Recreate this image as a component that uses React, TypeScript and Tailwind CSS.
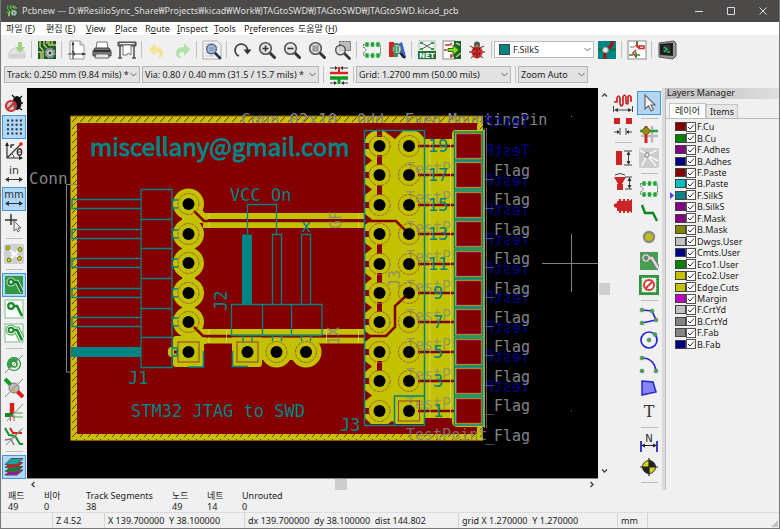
import type { ReactNode } from "react";

const rows = Array.from({ length: 10 }, (_, i) => 146 + Math.round(i * 29.4));
const headerRows = [204, 234, 263, 293, 322];

function Lens({ children }: { children?: ReactNode }) {
  return (
    <>
      <path d="M12.500 12.500l5 5" stroke="#333" strokeWidth="3" strokeLinecap="round" />
      <circle cx="8.500" cy="8.500" r="5.800" fill="#e4e4e4" stroke="#555" strokeWidth="1.600" />
      {children}
    </>
  );
}

function Chip() {
  return (
    <>
      <path d="M1.500 4.500h17v11h-17v-3a2.500 2.500 0 0 0 0-5z" fill="#f4f4f4" stroke="#666" strokeDasharray="2 1" />
      <path d="M3 2h4v5H3zM8.500 2h4v5h-4zM14 2h4v5h-4zM3 13h4v5H3zM8.500 13h4v5h-4zM14 13h4v5h-4z" fill="#1fa336" stroke="#e4f3e6" strokeWidth=".6" />
    </>
  );
}

function Schematic() {
  return (
    <>
      <rect x="1" y="1" width="18" height="18" fill="#fff" stroke="#888" />
      <path d="M10 1v5M2 15h4M9 12v6M9 15h4" stroke="#189030" strokeWidth="1.500" fill="none" />
      <path d="M12 6h5v2.500h-5zM9 10l-3 3 3 4M10 2v5h3" stroke="#c62828" strokeWidth="1.500" fill="none" />
      <path d="M3 7h4l2-2" stroke="#777" fill="none" />
    </>
  );
}

const icons: Record<string, ReactNode> = {
  Save: (
    <g opacity=".55">
      <path d="M2 13l3-4h10l3 4v5H2z" fill="#d8d8d8" stroke="#aaa" />
      <path d="M3 14h14v3H3z" fill="#bbb" />
      <path d="M11 2h4v5h3l-5 6-5-6h3z" fill="#66bb33" />
    </g>
  ),
  "Board setup": (
    <>
      <rect x="1" y="1" width="18" height="18" fill="#0d5c2b" />
      <path d="M3 1v6l3 3v9M7 1v4l3 3M12 1v4h7M1 12h3v7M15 1v3M10 1v3" stroke="#d6c86a" strokeWidth="1.400" fill="none" />
      <circle cx="13" cy="13" r="4.500" fill="#bbb" stroke="#999" strokeWidth="2" strokeDasharray="2 1.500" />
      <circle cx="13" cy="13" r="3.600" fill="#ccc" stroke="#888" />
      <circle cx="13" cy="13" r="1.500" fill="#0d5c2b" />
    </>
  ),
  "Page settings": (
    <>
      <path d="M3 1h10l4 4v14H3z" fill="#fff" stroke="#999" />
      <path d="M13 1v4h4" fill="#ddd" stroke="#999" />
      <path d="M6 2v17M1 14h18" stroke="#444" strokeWidth="1.200" />
      <path d="M4.500 5L6 2l1.500 3zM4.500 11L6 13l1.500-2zM8 12.500L6 14l2 1.500zM15 12.500l3 1.500-3 1.500z" fill="#333" />
    </>
  ),
  Print: (
    <>
      <path d="M5 2h10l1 7H4z" fill="#fff" stroke="#777" />
      <path d="M3 8h14l2 3v5H1v-5z" fill="#777" stroke="#444" />
      <path d="M2 10h16v2H2z" fill="#333" />
      <path d="M4 14h12l1 4H3z" fill="#e8e8e8" stroke="#666" />
    </>
  ),
  Plot: (
    <>
      <path d="M1 2h18v4H1z" fill="#777" stroke="#444" />
      <path d="M3 6v12M17 6v12M1 18h4M15 18h4" stroke="#555" strokeWidth="1.600" />
      <path d="M6 5h8v10l-3-2-1 2H6z" fill="#fff" stroke="#777" />
      <path d="M3 3.500h14" stroke="#eee" />
    </>
  ),
  Undo: <path d="M8 3v4c6 0 9 3 8 8-1 2-3 3-6 3 4-3 4-6-2-6v4L2 9.500z" fill="#f3df7a" opacity=".75" />,
  Redo: <path d="M12 3v4c-6 0-9 3-8 8 1 2 3 3 6 3-4-3-4-6 2-6v4l6-6.500z" fill="#a5dc9a" opacity=".8" />,
  Find: (
    <>
      <path d="M1 1h14l4 4v14H1z" fill="#f8f8f8" stroke="#aaa" />
      <path d="M3 4h10M3 7h13M3 10h13M3 13h13M3 16h9" stroke="#bbb" />
      <path d="M13 13l5 5" stroke="#26344f" strokeWidth="2.600" strokeLinecap="round" />
      <circle cx="9.500" cy="9" r="4.800" fill="#a9bdd8" stroke="#52688c" strokeWidth="1.400" />
      <path d="M7 8h5M7 10h5" stroke="#7186a6" />
    </>
  ),
  Refresh: (
    <>
      <path d="M7 16A6.200 6.200 0 1 1 15.500 10" stroke="#444" strokeWidth="1.800" fill="none" />
      <path d="M11.500 9.500h8l-4 5z" fill="#333" />
    </>
  ),
  "Zoom in": <Lens><path d="M5.500 8.500h6M8.500 5.500v6" stroke="#333" strokeWidth="1.600" /></Lens>,
  "Zoom out": <Lens><path d="M5.500 8.500h6" stroke="#333" strokeWidth="1.600" /></Lens>,
  "Zoom to fit": <Lens><rect x="6" y="6" width="5" height="5" fill="#aaa" stroke="#888" /></Lens>,
  "Zoom to selection": (
    <>
      <rect x="7.500" y="1.500" width="11" height="9" fill="#bdbdbd" stroke="#555" strokeDasharray="2 1" />
      <path d="M12.500 13.500l5 5" stroke="#333" strokeWidth="2.600" strokeLinecap="round" />
      <circle cx="8.500" cy="10" r="4.800" fill="#ddd" fillOpacity=".7" stroke="#555" strokeWidth="1.500" />
    </>
  ),
  "Footprint editor": <Chip />,
  "Footprint viewer": (
    <>
      <path d="M2 2h5v15H2z" fill="#d32222" />
      <path d="M7 3h4v14H7z" fill="#22a044" />
      <path d="M11 4l4-2 4 15-4 1z" fill="#2d65d8" />
      <path d="M13 13l5 5" stroke="#222" strokeWidth="2.400" />
      <circle cx="10" cy="9" r="4.600" fill="#cfdcd4" fillOpacity=".8" stroke="#667" strokeWidth="1.400" />
      <path d="M8 6v6M11 6v6" stroke="#2a9a4b" strokeWidth="1.500" />
    </>
  ),
  "Load netlist": (
    <>
      <rect x="2" y="1" width="16" height="18" fill="#f4f4f4" stroke="#bbb" />
      <path d="M5 3l10 6M15 3L5 9" stroke="#44664c" />
      <path d="M3 2h3v2H3zM14 2h3v2h-3zM3 8h3v2H3zM14 8h3v2h-3z" fill="#2d9a44" />
      <rect x="1" y="11" width="18" height="8" fill="#22703c" />
      <text x="10" y="18" textAnchor="middle" className="fill-white font-['DejaVu_Sans'] text-[7px] font-bold">NET</text>
    </>
  ),
  "Update board": (
    <>
      <rect x="1" y="1" width="12" height="18" fill="#fff" stroke="#888" />
      <path d="M12 1h7v18h-7z" fill="#0d6632" />
      <path d="M3 5h5l2-2M5 10H2M9 14v4M9 16h3" stroke="#c62828" strokeWidth="1.400" fill="none" />
      <path d="M14 3l4 2M14 17l5-4" stroke="#d6c86a" strokeWidth="1.400" />
      <path d="M6 8.500h5V5l6 5-6 5v-3.500H6z" fill="#8be01e" stroke="#2e6b12" />
    </>
  ),
  "Design rules check": (
    <>
      <path d="M3 6l4 2M2 12h4M4 18l4-3M17 6l-4 2M18 12h-4M16 18l-4-3" stroke="#666" strokeWidth="1.300" />
      <circle cx="10" cy="4.500" r="3" fill="#555" />
      <ellipse cx="10" cy="12" rx="5.500" ry="6.500" fill="#cc2d2d" />
      <path d="M10 6v12" stroke="#761010" />
      <path d="M7 9h1M12 9h1M7 14h1M12 14h1" stroke="#5a0d0d" strokeWidth="2" />
      <circle cx="10" cy="6" r="1.300" fill="#6ca846" />
    </>
  ),
  "Layer pair": (
    <>
      <rect x="1" y="1" width="18" height="18" fill="#008484" />
      <path d="M1 9.500h18" stroke="#0a7040" strokeWidth="2.500" />
      <path d="M8 19v-8l7-6V1" stroke="#9d1717" strokeWidth="3.200" fill="none" />
      <circle cx="8.500" cy="10" r="2.800" fill="#dfe8e6" stroke="#8aa" />
    </>
  ),
  "Open schematic": <Schematic />,
  "Scripting console": (
    <>
      <path d="M2 3l15-2 2 2v13l-3 3-14-2z" fill="#999" stroke="#555" />
      <path d="M3 4l13-1v13L3 15z" fill="#222" />
      <path d="M5 5l9-1v10l-9-1z" fill="#333" stroke="#111" />
      <path d="M7 7l3 2-3 3M10 12h3" stroke="#22c05a" strokeWidth="1.500" fill="none" />
    </>
  ),
  "Track width mode": (
    <>
      <path d="M1 8h18" stroke="#dd2222" strokeWidth="2.500" />
      <path d="M10 2v6" stroke="#dd2222" strokeWidth="2" />
      <path d="M1 13h18" stroke="#119922" strokeWidth="3.500" />
      <path d="M10 13v6" stroke="#119922" strokeWidth="3" />
      <path d="M1 3h6M19 3h-6M1 18h6M19 18h-6" stroke="#444" />
      <path d="M6 1l3 2-3 2zM14 1l-3 2 3 2zM5 16l3 2-3 2zM15 16l-3 2 3 2z" fill="#333" />
    </>
  ),
  "Disable rule check": (
    <>
      <path d="M8 2l3 3M18 3l-3 3M19 10h-4M18 17l-4-3M8 8l3 2" stroke="#111" strokeWidth="1.300" />
      <ellipse cx="13" cy="10" rx="4.500" ry="7" fill="#111" />
      <circle cx="7" cy="13" r="5" fill="#aaa" fillOpacity=".6" stroke="#c83232" strokeWidth="2.200" />
      <path d="M3.500 16.500l7-7" stroke="#c83232" strokeWidth="2" />
    </>
  ),
  Grid: (
    <path d="M3 3.500h15M3 7.800h15M3 12.200h15M3 16.500h15" stroke="#223344" strokeWidth="2" strokeDasharray="2 2.300" />
  ),
  "Polar coordinates": (
    <>
      <path d="M3 2v15h15M3 17L17 3" stroke="#333" strokeWidth="1.200" fill="none" />
      <path d="M1 5l2-4 2 4zM15 15l4 2-4 2z" fill="#222" />
      <circle cx="17" cy="3" r="1.800" fill="#f11" />
      <path d="M7 7V3.500M7 5c1-1 2-1.500 3-1" stroke="#333" strokeWidth="1.500" fill="none" />
      <ellipse cx="15.500" cy="11" rx="2.200" ry="3.200" fill="none" stroke="#433" strokeWidth="1.400" />
      <path d="M13.500 11h4M8 13q2 1 2 4" stroke="#433" fill="none" />
    </>
  ),
  Inches: (
    <>
      <text x="10" y="9" textAnchor="middle" className="fill-[#333] font-['DejaVu_Sans'] text-[11px]">in</text>
      <path d="M3 14.500h14" stroke="#333" /><path d="M5 12l-4 2.500L5 17zM15 12l4 2.500-4 2.500z" fill="#333" />
    </>
  ),
  Millimetres: (
    <>
      <text x="10" y="9" textAnchor="middle" className="fill-[#234] font-['DejaVu_Sans'] text-[10px]">mm</text>
      <path d="M3 14.500h14" stroke="#234" /><path d="M5 12l-4 2.500L5 17zM15 12l4 2.500-4 2.500z" fill="#234" />
    </>
  ),
  "Cursor shape": (
    <>
      <path d="M1 7h12M7 1v11" stroke="#333" strokeWidth="1.500" />
      <path d="M10 8v10l2.500-2 1.500 3 1.500-1-1.500-3h3z" fill="#eee" stroke="#666" />
    </>
  ),
  Ratsnest: (
    <>
      <rect width="20" height="20" rx="2" fill="#cfcfcf" />
      <path d="M4 4l12 11M16 5L5 16" stroke="#fff" strokeWidth="1.500" />
      <path d="M10 7l1 2 3 1-3 1-1 3-1-3-3-1 3-1z" fill="#fff" />
      <g fill="#cccc16" stroke="#77770d"><circle cx="4" cy="4" r="2" /><circle cx="16" cy="5.500" r="2" /><circle cx="5" cy="16" r="2" /><circle cx="15.500" cy="14.500" r="2" /></g>
    </>
  ),
  "Show filled zones": (
    <>
      <rect x="1" y="1" width="18" height="18" fill="#2f9a42" />
      <path d="M7 7h6l5 10" stroke="#bde5c4" strokeWidth="4.500" fill="none" /><circle cx="7" cy="7" r="4.500" fill="#bde5c4" />
      <path d="M7 7h6l5 10" stroke="#17722a" strokeWidth="2.500" fill="none" /><circle cx="7" cy="7" r="2.600" fill="#cfe8d2" stroke="#17722a" strokeWidth="1.800" />
    </>
  ),
  "Hide filled zones": (
    <>
      <rect x="1" y="1" width="18" height="18" fill="#fafafa" stroke="#7fbf88" />
      <path d="M7 7h6l5 10" stroke="#158a28" strokeWidth="2.500" fill="none" /><circle cx="7" cy="7" r="2.800" fill="#fff" stroke="#158a28" strokeWidth="2.200" />
    </>
  ),
  "Outline filled zones": (
    <>
      <rect x="1" y="1" width="18" height="18" fill="#fafafa" stroke="#7fbf88" />
      <path d="M7 7h6l5 10" stroke="#4aa659" strokeWidth="7" fill="none" /><circle cx="7" cy="7" r="5.500" fill="#4aa659" />
      <path d="M7 7h6l5 10" stroke="#e7f4e9" strokeWidth="5" fill="none" /><circle cx="7" cy="7" r="4.600" fill="#e7f4e9" />
      <path d="M7 7h6l5 10" stroke="#158a28" strokeWidth="2.500" fill="none" /><circle cx="7" cy="7" r="2.400" fill="#fff" stroke="#158a28" strokeWidth="1.800" />
    </>
  ),
  "Sketch pads": (
    <>
      <circle cx="10" cy="10" r="6.500" fill="#e5f1e6" stroke="#269538" strokeWidth="1.200" />
      <path d="M5.500 14.500a6.500 6.500 0 0 1 9-9.500z" fill="#3aa04a" />
      <circle cx="10" cy="10" r="3" fill="#f4f4f4" stroke="#269538" strokeWidth="1.500" /><path d="M1 19L19 1" stroke="#888" />
    </>
  ),
  "Sketch vias": (
    <>
      <path d="M1 1l6 6" stroke="#119c22" strokeWidth="4" /><path d="M13 13l6 6" stroke="#e01818" strokeWidth="4" />
      <circle cx="10" cy="10" r="5" fill="#bbb" stroke="#777" /><path d="M10 10l3 3-4 1z" fill="#e2b322" /><path d="M1 19L19 1" stroke="#888" />
    </>
  ),
  "Sketch tracks": (
    <>
      <path d="M8 1v10" stroke="#d81f1f" strokeWidth="4.500" /><path d="M1 13h8" stroke="#128a22" strokeWidth="4" />
      <path d="M9 11h10M9 15h10" stroke="#45a652" /><path d="M6.500 13v6M10 13v6" stroke="#c44" /><path d="M3 19L19 2" stroke="#888" />
    </>
  ),
  "High contrast": (
    <>
      <path d="M6 2l3 5h9" stroke="#dd2222" strokeWidth="2" fill="none" /><path d="M1 2l4 7 6 1 5 8h3" stroke="#13932a" strokeWidth="2" fill="none" />
      <path d="M1 14l6-1 3 6M8 13l9-9" stroke="#777" strokeWidth="1.400" fill="none" /><path d="M2 19L19 2" stroke="#888" />
    </>
  ),
  "Layers manager": (
    <>
      <path d="M7 13h12l-6 5H1z" fill="#9c169c" stroke="#555" /><path d="M7 9.500h12l-6 5H1z" fill="#118022" stroke="#555" />
      <path d="M7 5.500h12l-6 5H1z" fill="#dc1616" stroke="#555" /><path d="M7 1.500h12l-6 6H1z" fill="#17a1a1" stroke="#555" />
    </>
  ),
  "Tune track length": (
    <>
      <path d="M1 9h3V5q1.500-4 3 0v6q1.500 4 3 0V4q1.500-4 3 0v6q1.500 2 2 0V4q1-3 3 0v4h1" stroke="#cf2020" strokeWidth="1.700" fill="none" />
      <path d="M3 17h14M.5 13v6M19.500 13v6" stroke="#444" /><path d="M5 15l-4 2 4 2zM15 15l4 2-4 2z" fill="#333" />
    </>
  ),
  "Gap tool": (
    <><path d="M1 1h6v6H1zM13 1h6v6h-6z" fill="#cc2424" /><path d="M1 15h5M19 15h-5M7 11v7M13 11v7" stroke="#444" /><path d="M4 13l3 2-3 2zM16 13l-3 2 3 2z" fill="#333" /></>
  ),
  "Stub tool": (
    <><path d="M3 3h6v14H3z" fill="#cc2424" /><path d="M11 3h8M11 17h8M15.500 5v10" stroke="#444" /><path d="M13.500 7l2-4 2 4zM13.500 13l2 4 2-4z" fill="#333" /></>
  ),
  "Arc stub tool": (
    <><path d="M1 5h12L9 12h1v6H4v-6h1z" fill="#cc2424" /><path d="M2 3q5-3 10 0M12 5h7M12 17h7M16.500 6v10" stroke="#444" fill="none" /><path d="M14.500 9l2-4 2 4zM14.500 13l2 4 2-4z" fill="#333" /></>
  ),
  "Polynomial shape tool": <path d="M1 8l3-1V5h2V3h2v2h2V3h2v2h2V3h2v2l3-2v14l-3-2v2h-2v-2h-2v2h-2v-2H8v2H6v-2H4v-3l-3-1z" fill="#cc2424" />,
  Select: <path d="M6 2v14l3.500-3 2.500 5 2.500-1.500-2.500-4.500h4z" fill="#f5f5f5" stroke="#666" strokeWidth="1.200" />,
  "Highlight net": (
    <><path d="M13 2v17M2 12h17" stroke="#bbb" strokeWidth="2.500" /><path d="M7 2v17" stroke="#d02222" strokeWidth="3" /><path d="M1 7h18" stroke="#2f9a42" strokeWidth="2.500" /><circle cx="7" cy="7" r="3.500" fill="#a08b1d" stroke="#77660e" /></>
  ),
  "Local ratsnest": (
    <><rect width="20" height="20" rx="2" fill="#ccc" /><path d="M8 7L1 2M8 7l10-5M8 7l11 6M8 7L3 18M8 7l9 11" stroke="#f5f5f5" strokeWidth="1.600" /><circle cx="8" cy="7" r="2.200" fill="#eee" stroke="#777" /></>
  ),
  "Add footprint": <Chip />,
  "Route track": <path d="M3 2l3 8h8l4 8" stroke="#10851d" strokeWidth="2.400" fill="none" />,
  "Add via": <circle cx="10" cy="10" r="5" fill="#c2bd16" stroke="#8a8a83" strokeWidth="2.400" />,
  "Add zone": (
    <><rect x="1" y="1" width="18" height="18" fill="#43a04f" /><path d="M7 7h6l6 10" stroke="#777" strokeWidth="4.500" fill="none" /><circle cx="7" cy="7" r="4.200" fill="#ddd" stroke="#777" /><path d="M7 7h6l6 10" stroke="#ddd" strokeWidth="2.500" fill="none" /><circle cx="7" cy="7" r="2" fill="#43a04f" stroke="#777" /></>
  ),
  "Add keepout": (
    <><rect x="1.500" y="1.500" width="17" height="17" fill="#e4efe5" stroke="#2d9440" strokeWidth="3" /><rect x="3" y="3" width="14" height="14" stroke="#e4efe5" strokeDasharray="1 1" /><circle cx="10" cy="10" r="5" fill="#fff" stroke="#d93636" strokeWidth="2" /><path d="M6.500 13.500l7-7" stroke="#d93636" strokeWidth="2" /></>
  ),
  "Draw line": (
    <><path d="M3 4l10 1 4 9-14 3" stroke="#2727cc" strokeWidth="1.700" fill="none" /><g fill="#32b048" stroke="#777" strokeWidth=".6"><circle cx="3" cy="4" r="2" /><circle cx="13" cy="5" r="2" /><circle cx="17" cy="14" r="2" /><circle cx="3" cy="17" r="2" /></g></>
  ),
  "Draw circle": (
    <><circle cx="10" cy="10" r="8" fill="#f2f2fa" stroke="#2727cc" strokeWidth="1.700" /><g fill="#32b048" stroke="#777" strokeWidth=".6"><circle cx="10" cy="10" r="2" /><circle cx="16" cy="4.500" r="2" /></g></>
  ),
  "Draw arc": (
    <><path d="M3 4q12 0 14 13" stroke="#2727cc" strokeWidth="1.700" fill="none" /><g fill="#32b048" stroke="#777" strokeWidth=".6"><circle cx="3" cy="4" r="2" /><circle cx="17" cy="17" r="2" /><circle cx="3" cy="17" r="2" /></g></>
  ),
  "Draw polygon": <path d="M3 3l11 1 3 10-14 3z" fill="#8585f5" stroke="#2727cc" strokeWidth="1.500" />,
  "Add text": (
    <text x="10" y="15" textAnchor="middle" className="fill-[#333] font-['DejaVu_Serif'] text-[16px]">T</text>
  ),
  "Add dimension": (
    <><path d="M2 8v11M18 8v11" stroke="#2727cc" strokeWidth="1.800" /><path d="M3 12.500h14" stroke="#222" /><path d="M6 10.500l-4 2 4 2zM14 10.500l4 2-4 2z" fill="#222" /><text x="10" y="9" textAnchor="middle" className="fill-[#222] font-['DejaVu_Sans'] text-[10px]">N</text></>
  ),
  "Add target": (
    <><circle cx="10" cy="10" r="6.500" fill="#d9d216" stroke="#333" /><path d="M10 10V3.500a6.500 6.500 0 0 1 6.500 6.500zM10 10v6.500A6.500 6.500 0 0 1 3.500 10z" fill="#222" /><path d="M10 1v18M1 10h18" stroke="#222" strokeWidth="1.200" /></>
  ),
};

function Tool({ name, on, wide }: { name: string; on?: boolean; wide?: boolean }) {
  return (
    <button
      type="button"
      aria-label={name}
      aria-pressed={on}
      className={`flex h-6 shrink-0 items-center justify-center border ${wide ? "w-[25px]" : "w-6"} ${on ? "border-[#3f97dc] bg-[#b3d7f3]" : "border-transparent"}`}
    >
      <svg viewBox="0 0 20 20" fill="none" className="size-5 shrink-0">{icons[name]}</svg>
    </button>
  );
}

const VSep = () => (
  <div className="flex w-[5px] shrink-0 justify-center"><div className="h-[17px] w-px bg-[#c2c2c2]" /></div>
);
const HSep = () => (
  <div className="flex h-[7px] shrink-0 items-center"><div className="h-px w-[17px] bg-[#bdbdbd]" /></div>
);

function ToolColumn({ items, on, className }: { items: string[]; on: string[]; className: string }) {
  return (
    <div className={`flex shrink-0 flex-col items-center pt-[3px] ${className}`}>
      {items.map((item, i) => (item === "|" ? <HSep key={i} /> : <Tool key={i} name={item} on={on.includes(item)} />))}
    </div>
  );
}

function Combo({ label, value, className, swatch }: { label: string; value: string; className: string; swatch?: boolean }) {
  return (
    <div className={`grid h-[17px] shrink-0 items-center border ${swatch ? "border-[#bcbcbc] bg-white" : "border-[#b5b5b5] bg-[#e2e2e2]"} ${className}`}>
      {swatch && <span className="z-10 col-start-1 row-start-1 ml-1 size-[11px] border border-[#444] bg-[#008484]" />}
      <select aria-label={label} className={`col-start-1 row-start-1 h-[15px] w-full appearance-none bg-transparent leading-[15px] outline-none ${swatch ? "pl-[18px]" : "pl-[2px]"}`}>
        <option>{value}</option>
      </select>
      <svg viewBox="0 0 7 5" className="pointer-events-none col-start-1 row-start-1 mr-[2px] h-[5px] w-[7px] justify-self-end" fill="none">
        <path d="M.5 1l3 3 3-3" stroke="#666" />
      </svg>
    </div>
  );
}

const mono = "font-['DejaVu_Sans_Mono',monospace]";

function Ring({ x, y }: { x: number; y: number }) {
  return (
    <>
      <circle cx={x} cy={y} r="10.500" fill="none" stroke="#a55a38" strokeDasharray="3 1" />
      <circle cx={x} cy={y} r="6" fill="#000" />
    </>
  );
}

function Board() {
  return (
    <svg viewBox="27 88 571 389" preserveAspectRatio="xMinYMin meet" className="block min-h-0 w-full flex-1 bg-black" role="img" aria-label="Board layout">
      <defs>
        <pattern id="hatch" width="8" height="7" patternUnits="userSpaceOnUse" x="71" y="116">
          <path d="M1 6l5-5" stroke="#8c2000" />
        </pattern>
      </defs>
      <rect x="70.500" y="116" width="412.500" height="324.500" fill="#c2c200" />
      <path fillRule="evenodd" d="M70.500 116H483v324.500H70.500zM77 122.500v311h400v-311z" fill="url(#hatch)" />
      <path d="M70 116h413M70.500 116v324M71 440.500h412" stroke="#8c5a00" fill="none" />
      <g fill="#848484" className={`${mono} text-[16px]`}>
        <text x="29" y="184">Conn</text>
        <text x="241" y="125">Conn 02x10</text>
      </g>
      <g fill="#848484" className={`${mono} text-[15px]`}>
        <text x="357" y="125">Odd</text>
        <text x="405" y="125">Even</text>
        <text x="448" y="125">MountingPin</text>
      </g>
      <rect x="77" y="123" width="400" height="311" fill="#840000" />

      <g fill="#c2c200">
        <path d="M365 139h29l6-8h18l7 8h27v-5q0-4 4-4h29v297h-27q-6 0-6-5v-4h-27v8h-60z" />
        <path d="M200 213h165v6H200zM203 222h162v6H203zM200 329h165v6H200zM200 337.500h165v6H200z" />
        <path d="M188 204h8l12 12v7h-14z" />
        <rect x="182" y="204" width="13" height="148" />
        {headerRows.map((y) => <circle key={y} cx="188.500" cy={y} r="15.500" />)}
        <rect x="173" y="336" width="31" height="31" rx="3" />
        <rect x="168" y="347" width="12" height="10" rx="4" />
        <path d="M192 329h14v15h-14z" />
        <rect x="232" y="336" width="30" height="31" rx="3" />
        <circle cx="276.500" cy="352" r="15.500" />
        <circle cx="306" cy="352" r="15.500" />
        <path d="M262 338h45v22h-45z" />
        <path d="M366 130h28v14h-28z" />
      </g>

      <g fill="#840000">
        <path d="M365 131h9q-6 2-9 8zM384 131h19l-8 8zM416 131h9v8q-3-6-9-8z" />
        {rows.slice(0, 9).map((y) => <path key={y} d={`M365 ${y + 9}l7 5.500-7 5.500z`} />)}
        {rows.map((y) => <path key={y} d={`M365 ${y - 3}h4v6h-4z`} />)}
        {[132, 160, 190, 249, 278, 307, 366].map((y) => <path key={y} d={`M377 ${y - 5}h5v10h-5z`} />)}
        <path d="M365 418l8 8h-8zM385 426l7-5 7 5z" />
        <path d="M365 424h59v3h-59z" />
      </g>
      <g fill="none" stroke="#840000" strokeWidth="2.500">
        <path d="M194 211l10 10h192l12 12M194 327l9 9h183l9-9v-21l13-12" />
        {rows.map((y) => <path key={y} d={`M418 ${y}h38`} />)}
      </g>
      <path d="M174 352h4" stroke="#840000" strokeWidth="3" />

      <g fill="none" stroke="#dddd9a" opacity=".65">
        <path d="M430 141v276M450.500 139v280M209 213v6M209 222v6M358.500 213v6M358.500 222v6M209 329v6M209 337v6M226.500 329v14M326.500 329v14M358.500 329v14" />
      </g>

      <g fill="#848484" className={`${mono} text-[15px]`}>
        {rows.slice(0, 9).map((y) => <text key={y} x="406" y={y + 28} opacity=".65">TestP</text>)}
        <text x="406" y="440" opacity=".8">TestPoint</text>
      </g>
      <g fill="#000084" className={`${mono} text-[15px]`}>
        {rows.map((y) => <text key={y} transform={`translate(530 ${y - 19}) scale(-1 1)`}>TestP</text>)}
      </g>
      <g fill="#848484" className={`${mono} text-[15px]`}>
        {rows.map((y) => <text key={y} x="485" y={y + 30}>_Flag</text>)}
      </g>
      <g fill="none" stroke="#848484">
        <path d="M77 184.500H66.500V372H71M542 263.500h56M571.500 234v58" />
        <path d="M484.500 128v300M486.500 128v300" strokeOpacity=".7" />
        <path d="M571 116.500h1M571 411h1" />
      </g>

      {headerRows.map((y) => <Ring key={y} x={188.5} y={y} />)}
      <Ring x={276.5} y={352} />
      <Ring x={306} y={352} />
      {rows.map((y) => <Ring key={y} x={379.5} y={y} />)}
      {rows.slice(0, 9).map((y) => <Ring key={y} x={409} y={y} />)}
      {[[188.5, 352], [247.5, 352], [409, 411]].map(([x, y]) => (
        <g key={x}>
          <rect x={x - 10.5} y={y - 10} width="21" height="20" fill="none" stroke="#963c30" />
          <circle cx={x} cy={y} r="6" />
        </g>
      ))}

      {rows.map((y) => (
        <g key={y}>
          <rect x="454.500" y={y - 14} width="28" height="28" fill="#c2c200" stroke="#008484" strokeWidth="1.500" />
          <rect x="456.500" y={y - 12} width="24.500" height="24" fill="#840000" stroke="#943060" strokeWidth=".8" />
        </g>
      ))}

      <g fill="none" stroke="#008484" strokeWidth="1.300">
        <path d="M141 189.500h31v178h-31zM141 219.500h31M141 248.500h31M141 278.500h31M141 308.500h31M141 337.500h31" />
        {headerRows.map((y) => <path key={y} d={`M141 ${y - 4.5}H72v9h69M172 ${y - 4}h6M172 ${y + 4}h6`} />)}
        <path d="M172 348h5v8h-5" />
        <path d="M231.500 304.500H322v31h-90.500zM262.500 304.500v31M291.500 304.500v31M247.500 234v-29.500h29V235M272.500 304v-69.500h9V304M301.500 304v-69.500h9V304M243 336v6M252 336v6M272.500 336v5M281.500 336v5M301.500 336v5M310.500 336v5" />
        <path d="M188 367h15.500v-16M232.500 351v15.500H248" strokeWidth="1.600" />
        <path d="M364.500 130.500h60v295h-60zM424.500 396h-30v29.500" strokeWidth="1.500" />
      </g>
      <path d="M71 347h70v10H71zM242 234.500h10V304h-10z" fill="#008484" />

      <text x="90" y="156" fill="#008484" stroke="#008484" className="font-['Noto_Sans_CJK_KR',sans-serif] text-[24px]">
        miscellany@gmail.com
      </text>
      <g fill="#008484" className={`${mono} text-[17px]`}>
        <text x="230" y="201">VCC On</text>
        <text x="131" y="417">STM32 JTAG to SWD</text>
        <text x="128" y="384">J1</text>
        <text x="340" y="431">J3</text>
        <text x="301" y="232">x</text>
        <text transform="translate(227 311) rotate(-90)">J2</text>
        {rows.map((y, i) => <text key={y} x="438" y={y + 6} textAnchor="middle">{19 - i * 2}</text>)}
      </g>
      <g fill="#848484" opacity=".8" className={`${mono} text-[15px]`}>
        <text transform="translate(400 288) rotate(-90)">J3</text>
        <text transform="translate(341 229) rotate(-90)">GF</text>
        <text transform="translate(339 345) rotate(-90)">1X</text>
      </g>
    </svg>
  );
}

const layers: [string, string][] = [
  ["F.Cu", "#840000"], ["B.Cu", "#008400"], ["F.Adhes", "#840084"], ["B.Adhes", "#000084"], ["F.Paste", "#840000"],
  ["B.Paste", "#00c2c2"], ["F.SilkS", "#008484"], ["B.SilkS", "#840084"], ["F.Mask", "#840084"], ["B.Mask", "#848400"],
  ["Dwgs.User", "#c2c2c2"], ["Cmts.User", "#000084"], ["Eco1.User", "#008400"], ["Eco2.User", "#c2c200"], ["Edge.Cuts", "#c2c200"],
  ["Margin", "#c200c2"], ["F.CrtYd", "#c2c2c2"], ["B.CrtYd", "#848484"], ["F.Fab", "#848484"], ["B.Fab", "#000084"],
];

function LayersPanel() {
  return (
    <aside className="flex w-[114px] shrink-0 flex-col border-l border-[#bbb]">
      <h2 className="h-[11px] bg-linear-to-r from-[#bdbdbd] to-[#dedede] pl-px leading-[10px]">Layers Manager</h2>
      <div className="flex h-5 items-end border-b border-[#bbb] pl-[3px]" role="tablist">
        <button type="button" role="tab" aria-selected="true" className="h-[15px] w-[37px] border border-b-0 border-[#c4c4c4] bg-white leading-[14px]">레이어</button>
        <button type="button" role="tab" aria-selected="false" className="h-[14px] w-8 border border-b-0 border-[#c4c4c4] bg-[#e6e6e6] leading-[13px]">Items</button>
      </div>
      <ul className="mt-[2px] flex h-[229px] flex-col">
        {layers.map(([name, color]) => (
          <li key={name} className="flex min-h-0 flex-1 items-center">
            <svg viewBox="0 0 5 7" className="ml-1 h-[7px] w-[5px]">{name === "F.SilkS" && <path d="M0 0l4 3.500L0 7z" fill="#4141f0" />}</svg>
            <span className="h-[9px] w-[11px] border border-[#444]" style={{ backgroundColor: color }} />
            <label className="flex items-center">
              <span className="grid">
                <input type="checkbox" defaultChecked className="col-start-1 row-start-1 size-[10px] appearance-none border border-[#555] bg-white" />
                <svg viewBox="0 0 10 10" className="pointer-events-none col-start-1 row-start-1 size-[10px]" fill="none"><path d="M2 5l2 2 4-4.500" stroke="#333" /></svg>
              </span>
              <span className="ml-px leading-[11px]">{name}</span>
            </label>
          </li>
        ))}
      </ul>
    </aside>
  );
}

function Arrow({ d }: { d: string }) {
  return <svg viewBox="0 0 7 7" className="size-[7px] shrink-0" fill="none"><path d={d} stroke="#444" strokeWidth="1.400" /></svg>;
}

const mainTools = [
  "Save", "|", "Board setup", "|", "Page settings", "Print", "Plot", "|", "Undo", "Redo", "|", "Find", "|",
  "Refresh", "Zoom in", "Zoom out", "Zoom to fit", "Zoom to selection", "|", "Footprint editor", "Footprint viewer", "|",
  "Load netlist", "Update board", "Design rules check", "|",
];
const leftTools = [
  "Disable rule check", "Grid", "Polar coordinates", "Inches", "Millimetres", "Cursor shape", "|", "Ratsnest", "|",
  "Show filled zones", "Hide filled zones", "Outline filled zones", "|", "Sketch pads", "Sketch vias", "Sketch tracks", "High contrast", "|", "Layers manager",
];
const microwaveTools = ["Tune track length", "Gap tool", "|", "Stub tool", "Arc stub tool", "Polynomial shape tool"];
const drawTools = [
  "Select", "|", "Highlight net", "Local ratsnest", "|", "Add footprint", "Route track", "Add via", "Add zone", "Add keepout", "|",
  "Draw line", "Draw circle", "Draw arc", "Draw polygon", "Add text", "|", "Add dimension", "Add target", "|",
];
const menus: [string, string, string, string][] = [
  ["파일 (", "F", ")", "w-[40px]"], ["편집 (", "E", ")", "w-[40px]"], ["", "V", "iew", "w-[29px]"], ["", "P", "lace", "w-[30px]"],
  ["R", "o", "ute", "w-[32px]"], ["", "I", "nspect", "w-[37px]"], ["", "T", "ools", "w-[30px]"], ["P", "r", "eferences", "w-[54px]"], ["도움말 (", "H", ")", "w-[50px]"],
];
const stats: [string, string, string][] = [
  ["패드", "49", "w-9"], ["비아", "0", "w-[42px]"], ["Track Segments", "38", "w-[86px]"], ["노드", "49", "w-[35px]"], ["네트", "14", "w-[35px]"], ["Unrouted", "0", "w-20"],
];

export default function App() {
  return (
    <div className="flex min-h-screen w-full flex-col overflow-hidden border-x border-b border-[#777] bg-[#f0f0f0] font-['Noto_Sans','Noto_Sans_CJK_KR',sans-serif] text-[9px] whitespace-nowrap text-[#222]">
      <header className="flex h-[22px] shrink-0 items-center bg-[#4b4a48] pl-[5px] text-[#dedede]">
        <svg viewBox="0 0 20 20" className="mr-1 size-3" fill="none">{icons["Board setup"]}</svg>
        <h1 className="flex-1">Pcbnew — D:₩ResilioSync_Share₩Projects₩kicad₩Work₩JTAGtoSWD₩JTAGtoSWD₩JTAGtoSWD.kicad_pcb</h1>
        <div className="flex gap-6 pr-3">
          {["M0 4.500h8", "M.5.500h7v7h-7z", "M.5.500l7 7M7.500.500l-7 7"].map((d, i) => (
            <button key={d} type="button" aria-label={["Minimize", "Maximize", "Close"][i]}>
              <svg viewBox="0 0 8 8" className="size-2" fill="none"><path d={d} stroke="#ddd" /></svg>
            </button>
          ))}
        </div>
      </header>
      <nav className="flex h-[13px] shrink-0 bg-white pl-[5px]">
        {menus.map(([a, b, c, w]) => (
          <button key={a + b + c} type="button" className={`text-left leading-[13px] ${w}`}>{a}<span className="underline">{b}</span>{c}</button>
        ))}
      </nav>
      <div className="flex h-[29px] shrink-0 items-center pl-[3px]">
        {mainTools.map((t, i) => (t === "|" ? <VSep key={i} /> : <Tool key={i} name={t} wide />))}
        <Combo label="Active layer" value="F.SilkS" className="w-[100px]" swatch />
        <Tool name="Layer pair" wide />
        <VSep />
        <Tool name="Open schematic" wide />
        <VSep />
        <Tool name="Scripting console" wide />
      </div>
      <div className="flex h-6 shrink-0 items-center pb-[3px] pl-[3px]">
        <Combo label="Track width" value="Track: 0.250 mm (9.84 mils) *" className="mr-[2px] w-[136px]" />
        <Combo label="Via size" value="Via: 0.80 / 0.40 mm (31.5 / 15.7 mils) *" className="mr-[2px] w-[177px]" />
        <VSep />
        <Tool name="Track width mode" wide />
        <VSep />
        <Combo label="Grid" value="Grid: 1.2700 mm (50.00 mils)" className="mr-[2px] w-[155px]" />
        <VSep />
        <Combo label="Zoom" value="Zoom Auto" className="w-[70px]" />
      </div>

      <main className="flex min-h-[402px] flex-1">
        <ToolColumn items={leftTools} on={["Grid", "Millimetres", "Show filled zones", "Layers manager"]} className="w-[26px]" />
        <div className="flex min-w-0 flex-1 flex-col">
          <Board />
          <div className="flex h-3 shrink-0 items-center justify-between border-t border-[#888] px-[3px]">
            <Arrow d="M4.500 1L2 3.500 4.500 6" />
            <div className="ml-14 h-[11px] w-3 bg-[#cdcdcd]" />
            <Arrow d="M2.500 1L5 3.500 2.500 6" />
          </div>
        </div>
        <div className="flex w-3 shrink-0 flex-col items-center justify-between pt-1 pb-4">
          <Arrow d="M1 4.500L3.500 2 6 4.500" />
          <div className="mt-3 h-3 w-[11px] bg-[#cdcdcd]" />
          <Arrow d="M1 2.500L3.500 5 6 2.500" />
        </div>
        <ToolColumn items={microwaveTools} on={[]} className="w-[26px]" />
        <ToolColumn items={drawTools} on={["Select"]} className="w-[26px]" />
        <div className="w-[3px] shrink-0 bg-[#dadada]" />
        <LayersPanel />
      </main>

      <dl className="flex h-[22px] shrink-0 pl-[7px]">
        {stats.map(([k, v, w]) => (
          <div key={k} className={`leading-[11px] ${w}`}><dt>{k}</dt><dd>{v}</dd></div>
        ))}
      </dl>
      <footer className="flex h-4 shrink-0 border-t border-[#dcdcdc] leading-[15px]">
        <span className="w-[52px] border-r border-[#d4d4d4]" />
        <span className="w-[52px] border-r border-[#d4d4d4] pl-[3px]">Z 4.52</span>
        <span className="w-[140px] border-r border-[#d4d4d4] pl-[3px]">X 139.700000&nbsp; Y 38.100000</span>
        <span className="w-[214px] border-r border-[#d4d4d4] pl-[3px]">dx 139.700000&nbsp; dy 38.100000&nbsp; dist 144.802</span>
        <span className="w-[159px] border-r border-[#d4d4d4] pl-[3px]">grid X 1.270000&nbsp; Y 1.270000</span>
        <span className="w-[30px] border-r border-[#d4d4d4] pl-[3px]">mm</span>
        <svg viewBox="0 0 6 6" className="mt-2 mr-px ml-auto size-[6px]"><path d="M4 0h2v6H0V4h2V2h2z" fill="#c4c4c4" /></svg>
      </footer>
    </div>
  );
}
